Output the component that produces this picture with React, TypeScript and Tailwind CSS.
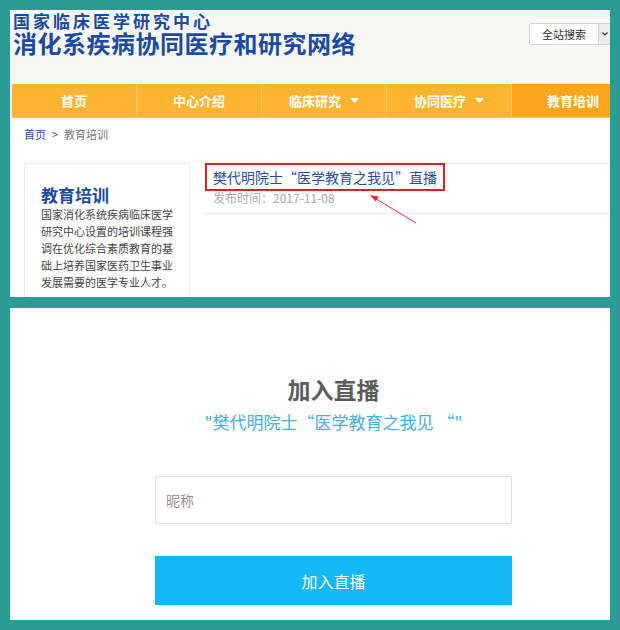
import React from 'react';

const font = { fontFamily: '"Noto Sans CJK SC", "Liberation Sans", sans-serif' };

const navItems = [
  { label: '首页', caret: false },
  { label: '中心介绍', caret: false },
  { label: '临床研究', caret: true },
  { label: '协同医疗', caret: true },
];

const Caret: React.FC = () => (
  <svg className="ml-[9px] w-[9px] h-[5px]" viewBox="0 0 9 5" fill="white">
    <path d="M0 0h9L4.5 5z" />
  </svg>
);

const App: React.FC = () => {
  return (
    <div className="w-[620px] h-[630px] bg-[#2b9b95] pt-[10px] px-[10px] overflow-hidden" style={font}>
      {/* top screenshot: course list page */}
      <div className="relative h-[287px] bg-white overflow-hidden">
        <div className="h-[74px] bg-[#f7f7f5] flex justify-between">
          <div className="pl-[3px] pt-[1px]">
            <div className="text-[17px] leading-[20px] font-bold tracking-[3px] text-[#1d4aa0]">国家临床医学研究中心</div>
            <div className="text-[24px] leading-[24px] font-bold tracking-[0.5px] text-[#1d4aa0]">消化系疾病协同医疗和研究网络</div>
          </div>
          <div className="mt-[13px] mr-[-3px] flex h-[22px] w-[84px] border border-[#d4d4d4] rounded-[2px] bg-white text-[11px] text-[#333]">
            <div className="flex-1 flex items-center justify-center">全站搜索</div>
            <div className="w-[14px] border-l border-[#d4d4d4] bg-[#ececec] flex items-center justify-start pl-[3px]">
              <svg className="w-[6px] h-[4px]" viewBox="0 0 6 4" fill="none" stroke="#333" strokeWidth="1.2">
                <path d="M0.5 0.5L3 3l2.5-2.5" />
              </svg>
            </div>
          </div>
        </div>

        <div className="ml-[2px] flex h-[34px] bg-[#fdb431] border-b border-[#f7c15c]">
          {navItems.map((item) => (
            <div
              key={item.label}
              className="w-[125px] border-r border-[#fcc864] flex items-center justify-center text-white text-[13px] font-bold"
            >
              {item.label}
              {item.caret && <Caret />}
            </div>
          ))}
          <div className="flex-1 bg-[#f9a61c] flex items-center justify-center text-white text-[13px] font-bold pl-[24px]">
            教育培训
          </div>
        </div>

        <div className="pl-[14px] pt-[8px] text-[11px] leading-[16px]">
          <span className="text-[#2a4a9a]">首页</span>
          <span className="text-[#555] mx-[6px]">&gt;</span>
          <span className="text-[#777]">教育培训</span>
        </div>

        <div className="flex mt-[21px]">
          <div className="ml-[14px] w-[166px] h-[160px] border border-[#ececec] pl-[16px] pt-[20px]">
            <div className="text-[17px] leading-[22px] font-bold text-[#1d4aa0]">教育培训</div>
            <p className="w-[134px] text-[11px] leading-[17px] text-[#444]">
              国家消化系统疾病临床医学研究中心设置的培训课程强调在优化综合素质教育的基础上培养国家医药卫生事业发展需要的医学专业人才。
            </p>
          </div>
          <div className="ml-[15px] flex-1">
            <div className="border-t border-b border-[#e9e9e9] h-[51px]">
              <div className="inline-block border-2 border-[#d8212c] -mt-px px-[6px] h-[28px] text-[14px] leading-[24px] text-[#2b4c9b]">
                樊代明院士“医学教育之我见”直播
              </div>
              <div className="pl-[8px] text-[12px] leading-[14px] text-[#aaa]">发布时间：2017-11-08</div>
            </div>
          </div>
        </div>

        {/* annotation arrow */}
        <svg className="absolute left-[355px] top-[180px] w-[60px] h-[40px]" viewBox="0 0 60 40">
          <line x1="51" y1="33" x2="8" y2="7" stroke="#e0303a" strokeWidth="1" />
          <path d="M5 5L14 6.5L10.5 11.5z" fill="#e0303a" />
        </svg>
      </div>

      <div className="h-[11px]" />

      {/* bottom screenshot: join live form */}
      <div className="h-[312px] bg-white">
        <div className="ml-[145px] w-[357px] flex flex-col">
          <div className="pt-[66px] text-center text-[23px] leading-[30px] font-bold text-[#5c5c5c]">加入直播</div>
          <div className="mt-[6px] text-center text-[17px] leading-[24px] text-[#48aee3]">
            "樊代明院士“医学教育之我见 “"
          </div>
          <input
            className="mt-[42px] h-[48px] border border-[#e2e2e2] px-[10px] text-[14px] text-[#333] placeholder:text-[#9b9191] outline-none"
            placeholder="昵称"
          />
          <button className="mt-[32px] h-[49px] bg-[#13b9f6] text-white text-[16px]">加入直播</button>
        </div>
      </div>
    </div>
  );
};

export default App;
